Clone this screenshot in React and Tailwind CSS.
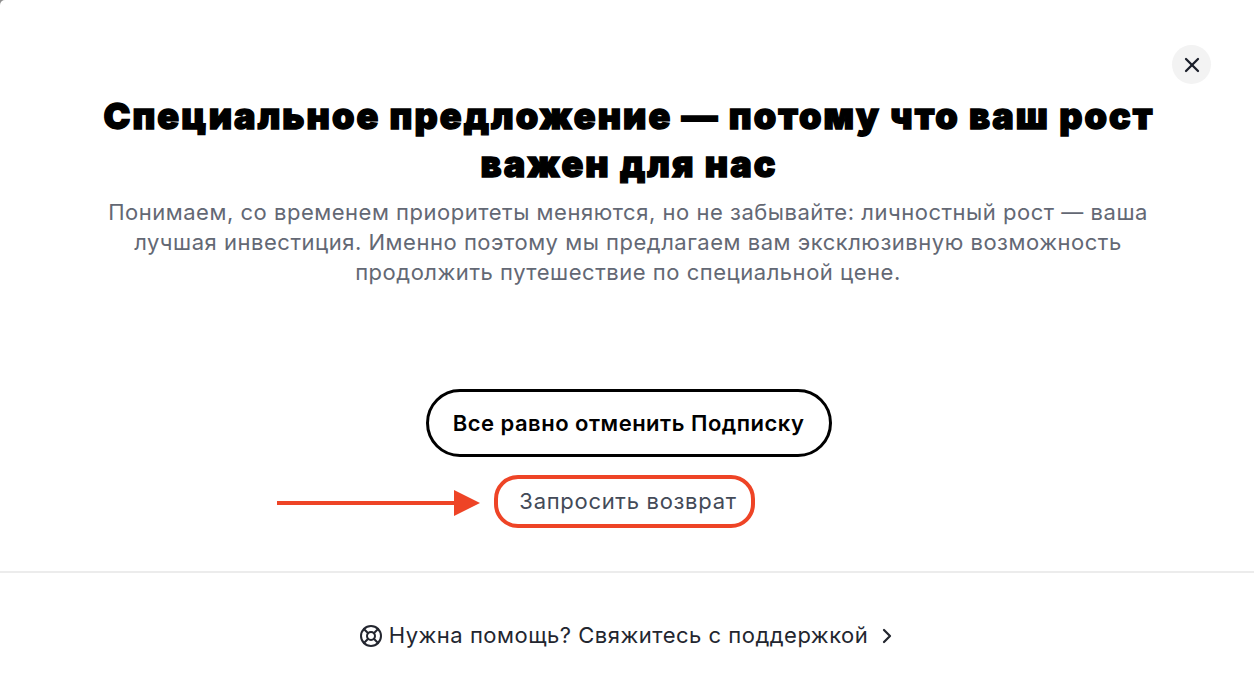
import React from 'react';
import { X, LifeBuoy, ChevronRight } from 'lucide-react';

const App = () => {
  return (
    <div className="h-[692px] w-full overflow-hidden bg-[#8f8f8f] font-['Inter',sans-serif]">
      <div className="relative flex h-full flex-col rounded-tl-[5px] bg-white">
        <button className="absolute right-[43px] top-[45px] flex h-[39px] w-[39px] items-center justify-center rounded-full bg-[#f3f3f3] text-[#1b1f2a]">
          <X size={24} strokeWidth={2.25} />
        </button>

        <div className="flex h-[571px] flex-col items-center pt-[92px]">
          <h1 className="ml-[4px] w-[1100px] text-center text-[36px] font-black leading-[48px] tracking-[2.05px] text-black [-webkit-text-stroke:1.4px_black]">
            Специальное предложение — потому что ваш рост важен для нас
          </h1>
          <p className="ml-[2px] mt-[9px] w-[1060px] text-center text-[22px] leading-[30px] tracking-[0.52px] text-[#636874]">
            Понимаем, со временем приоритеты меняются, но не забывайте: личностный рост — ваша лучшая инвестиция. Именно поэтому мы предлагаем вам эксклюзивную возможность продолжить путешествие по специальной цене.
          </p>

          <button className="ml-[3px] mt-[102px] flex h-[68px] w-[406px] items-center justify-center rounded-full border-[3px] border-black text-[22px] font-semibold tracking-[0.5px] text-black">
            Все равно отменить Подписку
          </button>

          <div className="relative mr-[5px] mt-[18px] flex">
            <svg className="absolute left-[-217px] top-[14px]" width="203" height="28" viewBox="0 0 203 28">
              <path d="M0 14H180" stroke="#ee4426" strokeWidth="4" />
              <path d="M177 1L203 14L177 27Z" fill="#ee4426" />
            </svg>
            <button className="flex h-[53px] w-[261px] items-center justify-center rounded-[24px] border-[4px] border-[#ee4426] pl-[7px] text-[22px] tracking-[0.7px] text-[#434a57]">
              Запросить возврат
            </button>
          </div>
        </div>

        <div className="flex flex-1 items-center justify-center gap-[6px] border-t-2 border-[#ececec] pl-[4px] pt-[6px] text-[22px] tracking-[0.5px] text-[#23262f]">
          <LifeBuoy size={24} strokeWidth={2} />
          <span>Нужна помощь? Свяжитесь с поддержкой</span>
          <ChevronRight size={24} strokeWidth={2.25} className="ml-[1px]" />
        </div>
      </div>
    </div>
  );
};

export default App;
